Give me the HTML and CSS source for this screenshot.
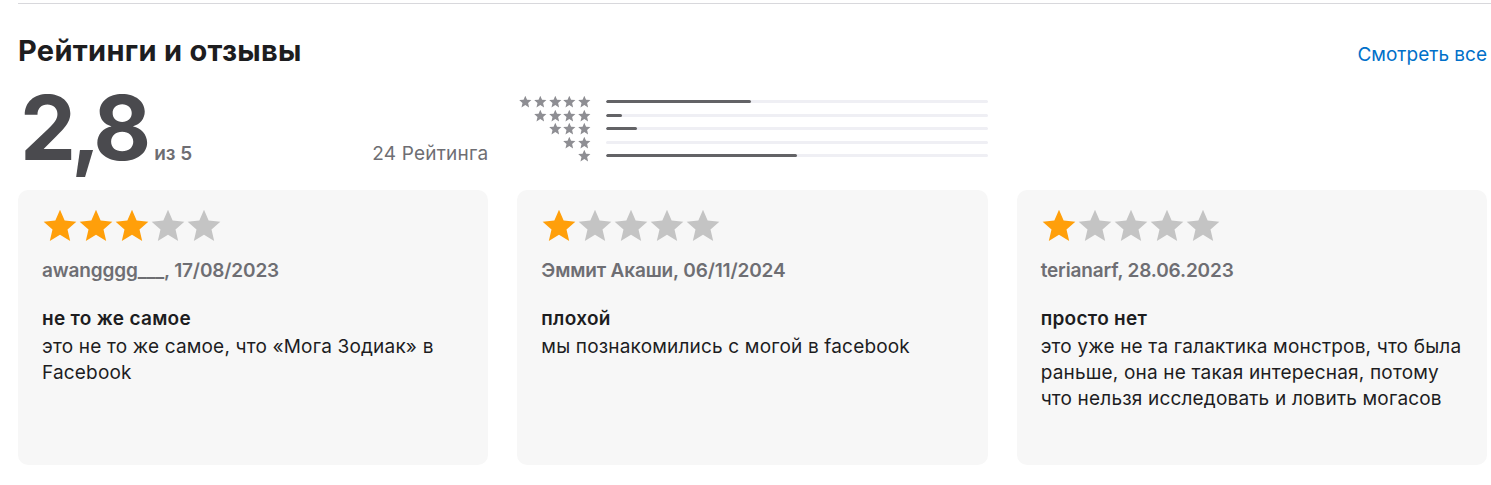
FILE: index.html
```html
<!DOCTYPE html>
<html lang="ru">
<head>
<meta charset="utf-8">
<title>Рейтинги и отзывы</title>
<link rel="stylesheet" href="styles.css">
</head>
<body>
<svg width="0" height="0" class="defs" aria-hidden="true">
  <defs>
    <symbol id="star" viewBox="0 0 24 24">
      <path d="M12 1.2l3.1 7.2 7.8.7-5.9 5.2 1.8 7.7L12 17.9l-6.8 4.1 1.8-7.7-5.9-5.2 7.8-.7z"/>
    </symbol>
  </defs>
</svg>
<section class="ratings">
  <div class="rule"></div>
  <header class="head">
    <h2 class="title">Рейтинги и отзывы</h2>
    <a class="see-all" href="#">Смотреть все</a>
  </header>

  <div class="summary">
    <div class="avg">
      <div class="avg-left">
        <span class="avg-num">2,8</span>
        <span class="avg-of">из 5</span>
      </div>
      <span class="avg-count">24 Рейтинга</span>
    </div>
    <div class="hist">
      <div class="hrow">
        <div class="hstars"><svg><use href="#star"/></svg><svg><use href="#star"/></svg><svg><use href="#star"/></svg><svg><use href="#star"/></svg><svg><use href="#star"/></svg></div>
        <div class="track"><div class="fill" style="width:38%"></div></div>
      </div>
      <div class="hrow">
        <div class="hstars"><svg><use href="#star"/></svg><svg><use href="#star"/></svg><svg><use href="#star"/></svg><svg><use href="#star"/></svg></div>
        <div class="track"><div class="fill" style="width:4%"></div></div>
      </div>
      <div class="hrow">
        <div class="hstars"><svg><use href="#star"/></svg><svg><use href="#star"/></svg><svg><use href="#star"/></svg></div>
        <div class="track"><div class="fill" style="width:8%"></div></div>
      </div>
      <div class="hrow">
        <div class="hstars"><svg><use href="#star"/></svg><svg><use href="#star"/></svg></div>
        <div class="track"><div class="fill" style="width:0%"></div></div>
      </div>
      <div class="hrow">
        <div class="hstars"><svg><use href="#star"/></svg></div>
        <div class="track"><div class="fill" style="width:50%"></div></div>
      </div>
    </div>
  </div>

  <div class="cards">
    <article class="card">
      <div class="stars">
        <svg class="on"><use href="#star"/></svg><svg class="on"><use href="#star"/></svg><svg class="on"><use href="#star"/></svg><svg><use href="#star"/></svg><svg><use href="#star"/></svg>
      </div>
      <div class="meta">awangggg___, 17/08/2023</div>
      <h3 class="rtitle">не то же самое</h3>
      <p class="rbody">это не то же самое, что «Мога Зодиак» в Facebook</p>
    </article>
    <article class="card">
      <div class="stars">
        <svg class="on"><use href="#star"/></svg><svg><use href="#star"/></svg><svg><use href="#star"/></svg><svg><use href="#star"/></svg><svg><use href="#star"/></svg>
      </div>
      <div class="meta">Эммит Акаши, 06/11/2024</div>
      <h3 class="rtitle">плохой</h3>
      <p class="rbody">мы познакомились с могой в facebook</p>
    </article>
    <article class="card">
      <div class="stars">
        <svg class="on"><use href="#star"/></svg><svg><use href="#star"/></svg><svg><use href="#star"/></svg><svg><use href="#star"/></svg><svg><use href="#star"/></svg>
      </div>
      <div class="meta">terianarf, 28.06.2023</div>
      <h3 class="rtitle">просто нет</h3>
      <p class="rbody">это уже не та галактика монстров, что была раньше, она не такая интересная, потому что нельзя исследовать и ловить могасов</p>
    </article>
  </div>
</section>
</body>
</html>
```

FILE: styles.css
```css
* { box-sizing: border-box; }
html, body { margin: 0; padding: 0; background: #fff; }
body {
  font-family: Inter, "Noto Sans", "Liberation Sans", sans-serif;
  color: #1d1d1f;
}
.defs { position: absolute; width: 0; height: 0; overflow: hidden; }

.ratings { padding-left: 18px; }
.rule { margin-top: 3px; border-top: 1px solid #d8d8dc; }

.head {
  display: flex;
  justify-content: space-between;
  align-items: baseline;
  padding-right: 4px;
  margin-top: 31px;
  height: 32px;
}
.title {
  margin: 0;
  font-size: 29px;
  line-height: 32px;
  font-weight: 700;
  letter-spacing: 0.3px;
  color: #1d1d1f;
}
.see-all {
  font-size: 19px;
  color: #0070c9;
  text-decoration: none;
}

.summary {
  display: grid;
  grid-template-columns: repeat(3, 1fr);
  column-gap: 29px;
  padding-right: 4px;
  height: 107px;
  align-items: end;
}
.avg {
  display: flex;
  justify-content: space-between;
  align-items: baseline;
}
.avg-left { display: flex; align-items: baseline; gap: 8px; }
.avg-num {
  font-size: 89px;
  line-height: 92px;
  font-weight: 700;
  color: #4a4a4e;
  letter-spacing: -5px;
  margin-left: 2px;
}
.avg-of {
  font-size: 19px;
  font-weight: 600;
  color: #6e6e73;
}
.avg-count {
  font-size: 19px;
  color: #6e6e73;
  letter-spacing: 0.2px;
}

.hist {
  display: flex;
  flex-direction: column;
  align-self: start;
  margin-top: 28px;
}
.hrow {
  display: flex;
  align-items: center;
  height: 13.5px;
}
.hstars {
  width: 74px;
  display: flex;
  justify-content: flex-end;
  fill: #8e8e93;
}
.hstars svg { width: 14.6px; height: 13.5px; }
.track {
  flex: 1;
  margin-left: 15px;
  height: 3px;
  background: #efeff4;
  border-radius: 2px;
  overflow: hidden;
}
.fill { height: 100%; background: #636366; border-radius: 2px; }

.cards {
  display: grid;
  grid-template-columns: repeat(3, 1fr);
  column-gap: 29px;
  padding-right: 4px;
  margin-top: 16px;
}
.card {
  background: #f7f7f7;
  border-radius: 10px;
  height: 275px;
  padding: 17px 24px 0 24px;
}
.stars { display: flex; height: 38px; fill: #c4c4c4; }
.stars svg { width: 36px; height: 38px; }
.stars svg.on { fill: #ff9f0a; }
.meta {
  margin-top: 15px;
  font-size: 19px;
  line-height: 22px;
  font-weight: 600;
  color: #6e6e73;
  letter-spacing: -0.15px;
}
.rtitle {
  margin: 24px 0 2px;
  font-size: 19px;
  line-height: 26px;
  font-weight: 600;
  color: #1d1d1f;
  letter-spacing: 0.3px;
}
.rbody {
  margin: 0;
  font-size: 19px;
  line-height: 26px;
  color: #1d1d1f;
  letter-spacing: 0.18px;
}
```
